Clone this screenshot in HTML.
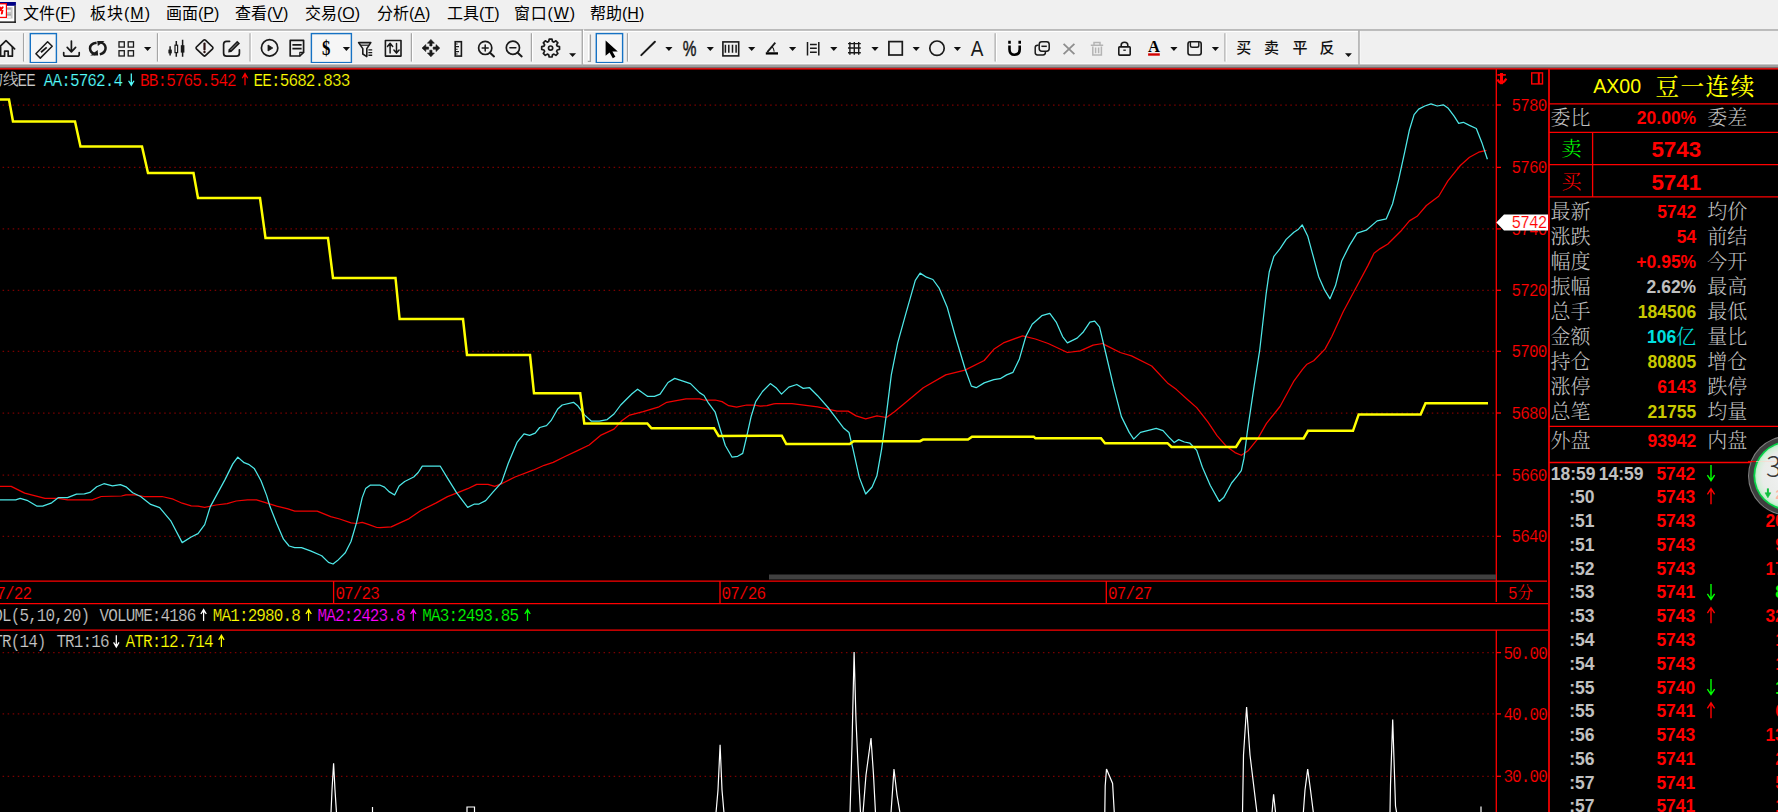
<!DOCTYPE html>
<html lang="zh-CN"><head><meta charset="utf-8"><title>AX00 豆一连续</title>
<style>
html,body{margin:0;padding:0;background:#000;}
body{width:1778px;height:812px;overflow:hidden;position:relative;font-family:"Liberation Sans","Noto Sans CJK SC",sans-serif;}
#chart{position:absolute;left:0;top:0;}
#chart text{white-space:pre;}
.m{font-family:"Liberation Mono",monospace;font-size:16px;letter-spacing:-0.88px;stroke:#000;stroke-width:0.18px;}
.c{font-family:"Liberation Serif","Noto Serif CJK SC",serif;font-size:17.5px;}
#menubar{position:absolute;left:0;top:0;width:1778px;height:30px;background:#f0f0f0;z-index:2;}
#menubar span.mi{position:absolute;top:3px;font-size:16px;line-height:22px;color:#000;white-space:nowrap;font-family:"Liberation Sans","Noto Sans CJK SC",sans-serif;}
#menubar u{text-decoration:underline;text-underline-offset:2px;text-decoration-thickness:1px;}
#toolbar{position:absolute;left:0;top:29px;width:1778px;height:34px;overflow:hidden;background:#f0f0f0;z-index:2;}
</style></head><body>
<svg id="chart" width="1778" height="812" viewBox="0 0 1778 812"><rect x="0" y="60" width="1778" height="752" fill="#000"/><rect x="0" y="62" width="1778" height="1" fill="#f0f0f0"/><rect x="0" y="63" width="1778" height="1" fill="#f7f7f7"/><rect x="0" y="64" width="1778" height="1" fill="#c6c6c6"/><rect x="0" y="65" width="1778" height="2" fill="#a0a0a0"/><rect x="0" y="67" width="1778" height="1" fill="#7a6c6c"/><rect x="0" y="68" width="1778" height="1" fill="#dc1414"/><rect x="0" y="69" width="1778" height="1" fill="#8c0000"/><g stroke="#ff0000" stroke-width="1.3" fill="none"><path d="M0 581.2H1547M0 603.6H1549M0 630.1H1549"/><path d="M1496.3 69V602M1496.3 630V812"/><path d="M1549 69V812" stroke-width="2" stroke="#d80000"/><path d="M333.6 581V603M720 581V603M1106.3 581V603"/></g><g stroke="#7a0000" stroke-width="1.25" stroke-dasharray="1.5 3.55" fill="none"><path d="M2.6 105H1496"/><path d="M2.6 167.4H1496"/><path d="M2.6 228.9H1496"/><path d="M2.6 290.3H1496"/><path d="M2.6 351.3H1496"/><path d="M2.6 413H1496"/><path d="M2.6 475H1496"/><path d="M2.6 536.3H1496"/><path d="M2.6 652.6H1496"/><path d="M2.6 713.9H1496"/><path d="M2.6 776.3H1496"/></g><g stroke="#ff0000" stroke-width="1.3"><path d="M1496 105H1501"/><path d="M1496 167.4H1501"/><path d="M1496 228.9H1501"/><path d="M1496 290.3H1501"/><path d="M1496 351.3H1501"/><path d="M1496 413H1501"/><path d="M1496 475H1501"/><path d="M1496 536.3H1501"/><path d="M1496 652.6H1501"/><path d="M1496 713.9H1501"/><path d="M1496 776.3H1501"/></g><path d="M1359 63V65.5M582.3 63V65.5" stroke="#b0b0b0" stroke-width="1.5"/><rect x="769" y="574.5" width="727" height="5" fill="#404040"/><polyline points="0,486.4 11.2,486.4 24.7,493.1 45,498.3 58.5,498.3 67.5,499.9 92.2,499.9 101.2,496.5 121.5,496 126,494.9 135,494.9 144,496.5 162,496.5 173.2,499.2 182.2,503.2 191.2,505.9 198,506.2 204.7,507.3 216,505 227.2,503.7 236.2,501 247.5,499.9 256.5,499.9 265.5,502.6 276.7,506.2 288,508.9 294.7,511.1 317.2,511.1 330.7,516.7 339.7,519 351,522.8 356.6,523.5 362.2,522.4 369,524.6 376.8,527.5 380,527.6 391.2,526.9 409.2,518.6 420.5,510.7 436.2,502.9 447.5,496.6 456.5,493.2 467.7,488.7 476.7,484.4 488,484.4 494.7,486.4 502.6,483.3 515,477 533,470.2 544.2,465.3 553.2,462.4 564.5,456.7 578,450.4 589.2,445 600.5,435.4 614,429.1 621.8,420.7 629.7,415.1 643.2,411.7 659,406.8 666.8,402.3 686,398.9 699.5,398.9 704,400 715.2,400 722,401.6 728.7,405.7 736.6,407.2 746.7,405 753.5,405 760.2,406.1 767,405.7 773.7,403.9 776,403.7 792,403.7 817.6,406.9 836.9,411.1 848.1,411.1 856.1,415.9 865.7,418.8 876.9,415.9 886.5,417.5 894.5,411.7 904.1,403.7 923.3,387.7 945.7,374.9 965,370.1 984.2,360.5 993.8,349.3 1003.4,342.9 1022.6,335.8 1035.4,339 1048.2,343.5 1067.4,352.5 1080.3,350.9 1093.1,345.1 1102.7,343.5 1104.5,344.6 1120.2,352.5 1131.5,355.9 1151.7,366 1167.5,382.9 1176.5,389.6 1187.7,399.7 1196.7,407.6 1208,422.2 1217,435.7 1226,445.9 1235,452.6 1241.3,455.3 1248.5,450.4 1257.5,439.1 1266.5,423.4 1280,406.5 1293.5,381.7 1302.5,369.4 1307,364.2 1313.7,360.8 1325,349.1 1331.7,336.7 1343.2,311.8 1355.5,288.7 1367.9,265.6 1374,253.3 1380.2,248.6 1387.9,244 1401.7,230.2 1409.4,220.9 1417.1,216.3 1426.4,205.5 1438.7,196.3 1447.9,180.9 1460.3,165.5 1469.5,157.2 1478.7,152.2 1486.4,150.4" fill="none" stroke="#f00000" stroke-width="1.25" stroke-linejoin="round"/><polyline points="0,499.9 15.7,499.9 20.2,498.3 27,500.3 37.1,506.2 42.7,506.2 51.7,502.8 58.5,497.6 67.5,497.6 76.5,494.2 84.4,493.8 90,492.4 96.7,486.8 103.9,483.7 112.5,485.9 120.4,484.6 126,486.8 132.7,492.7 140.6,496.5 150.7,504.4 159.7,507.7 171,521.2 182.2,542.6 191.2,537 198,533.6 204.7,524.6 210.3,506.6 225,479.6 232.8,463.9 237.8,457.1 244.1,462.7 248.6,464.3 254.2,468.4 261,480.7 266.6,495.4 270,506.6 276.7,523.5 283.5,539.2 289.1,546 294.7,547.6 301.5,547.6 310.5,550.9 321.7,555.7 328.5,562.4 333,564 337.5,560.6 345.3,552.7 351,541.5 356.6,522.4 362.2,497.6 365.6,488.6 370.1,485.2 380.2,485.2 384.5,487.1 389,491.6 394.6,495 399.1,486 404.7,481.5 413.7,477 418.2,472.5 422.3,466.2 440.3,466.2 447.5,478.1 456.5,492.7 467.7,507.4 474.5,504 479,504 485.7,500.6 492.5,492.7 501.5,482.6 508.2,463.5 517.2,442.1 524,433.8 529.6,435.4 535.2,433.1 539.7,427.5 546.5,425.7 551,420.7 557.7,409 562.2,405 573.5,402.3 578,406.1 584.7,415.1 591.5,421.2 599.3,421.2 607.2,419.6 614,414 620.7,405 632,393.7 637.6,389.2 642.1,392.6 647.7,396.4 654.5,396.4 660.1,394.2 668,382.5 674.7,378.4 681.5,380.7 690.5,383.6 699.5,392.6 704,395.5 708.5,403.2 715.2,412.2 719.7,427.5 725.3,445.5 732.1,457.2 737.7,456.3 742.7,453.4 746.7,436.5 751.2,416.2 755.7,401.6 762.5,391.5 770.3,383.6 776,387.7 781.5,394.1 788.8,387.1 796.8,384.5 803.2,388.4 809.6,387.7 817.6,395.7 828.9,408.5 843.3,427.7 849,432.5 852.9,448.6 859.3,477.4 865.7,494 872.1,487 876.9,475.8 881.7,448.6 886.5,413.3 891.3,374.9 897.7,342.9 905.7,314.1 915.3,280.4 920.1,273.1 926.5,277.2 932.9,279.5 939.3,288.4 947.3,307.6 955.4,336.5 965,368.5 971.4,386.1 976.2,387.7 984.2,382.9 993.8,379.7 1000.2,378.7 1006.6,374.9 1013,372.3 1019.4,358.9 1025.8,336.5 1032.2,324.3 1041.8,315.7 1049.8,313.4 1056.2,322.1 1062.6,336.5 1067.4,342.9 1077.1,338.1 1083.5,331.7 1089.9,322.1 1094.7,321.1 1099.5,326.9 1105.6,352.5 1113.5,386.2 1121.4,416.6 1129.2,432.4 1133.7,439.1 1140.5,432.4 1149.5,430.1 1156.2,428.3 1163,430.6 1168.6,436.9 1174.2,442.5 1178.7,439.6 1184.4,442 1190,443.2 1196.7,450.4 1202.4,467.2 1210.2,485.2 1219.2,501.4 1223.7,497.6 1231.6,483 1237.2,476.2 1241.3,470.6 1244,458.2 1247.4,431.2 1254.1,386.2 1259.7,350.2 1266.2,293.3 1269.3,271.7 1273.9,256.3 1280.1,248.6 1286.2,239.4 1293.9,232.3 1298.5,229.2 1302.2,224.9 1307.8,236.3 1312.4,253.3 1318.6,276.4 1324.7,290.2 1330,298.8 1335.5,285.6 1341.7,261 1349.4,245.6 1357.1,233.2 1366.3,230.2 1377.1,220.9 1386.3,218.8 1392.5,204 1398.7,179.3 1404.8,151.6 1409.4,130 1414.1,114.6 1418.7,109.1 1424.8,106 1431,103.9 1437.2,106 1443.3,104.8 1447.9,107.9 1454.1,116.2 1458.7,123.3 1463.3,122.3 1469.5,125.4 1476.3,128.5 1481.8,142.4 1487.4,159.3" fill="none" stroke="#4ee8e8" stroke-width="1.25" stroke-linejoin="round"/><polyline points="0,99.5 9,99.5 13,121.5 75,121.5 80.5,146.5 142,146.5 148,173 193.5,173 198,198 260,198 265.5,238 328,238 333,278 395.5,278 399.6,319 463,319 467,355 530,355 534,393.3 580.2,393.3 584.3,423.4 647.3,423.4 651.5,428.2 714,428.2 718.6,436 781.8,435.7 786.3,444 849.7,444 853.5,441.2 920,441.2 923,439.6 968,439.6 972,436.7 1033.8,436.7 1035.4,438.3 1101,438.3 1105,443.3 1167.5,443.2 1171.5,447 1236,447 1241.3,438.4 1303.6,438.4 1308,430.8 1353,430.8 1358.7,414.4 1420.6,414.4 1425.5,403.3 1488,403.3" fill="none" stroke="#ffff00" stroke-width="2.5" stroke-linejoin="miter"/><g fill="none" stroke="#fff" stroke-width="1.2" stroke-linejoin="miter"><polyline points="331,813 332,790 333.6,763.3 335,790 336.5,813"/><polyline points="372.5,813 372.5,807"/><polyline points="467,813 467,807 474.5,807 474.5,813"/><polyline points="716,813 718,790 720.1,744.7 722,790 724,813"/><polyline points="850,813 852,745 854.1,651.9 856,720 858,765 860.5,813"/><polyline points="863,813 866,775 871,738 873.5,775 875.5,813"/><polyline points="891,813 894,769 897,795 900,813"/><polyline points="1104.8,813 1105.2,786 1106.5,769 1112.6,783.5 1114.3,813"/><polyline points="1242.5,813 1243.5,755 1246.6,707 1250,755 1257,813"/><polyline points="1272,813 1273.6,794.3 1275.6,813"/><polyline points="1303.3,813 1305,790 1307.7,769 1310.5,790 1313.4,813"/><polyline points="1390,813 1390.5,785 1392.7,719.4 1394.5,775 1395.5,806 1396.7,813"/><polyline points="1481,813 1481,806.5"/></g><text x="-12.6" y="84.8" fill="#c8c8c8" class="c" style="font-size:15.5px">均线</text><text transform="translate(17.5 85.6) scale(1 1.09)" fill="#c8c8c8" class="m">EE</text><text transform="translate(43.8 85.6) scale(1 1.09)" fill="#54fcfc" class="m">AA:5762.4</text><path d="M131.3 73.6V84.89999999999999M128.60000000000002 80.7L131.3 85.3L134.0 80.7" stroke="#54fcfc" stroke-width="1.25" fill="none"/><path d="M129.9 82.3L131.3 85.0L132.70000000000002 82.3Z" fill="#54fcfc"/><text transform="translate(140 85.6) scale(1 1.09)" fill="#ff0000" class="m">BB:5765.542</text><path d="M245 85.3V74.0M242.3 78.19999999999999L245 73.6L247.7 78.19999999999999" stroke="#ff0000" stroke-width="1.25" fill="none"/><path d="M243.6 76.6L245 73.89999999999999L246.4 76.6Z" fill="#ff0000"/><text transform="translate(253.6 85.6) scale(1 1.09)" fill="#ffff00" class="m">EE:5682.833</text><text transform="translate(-15.4 621.4) scale(1 1.09)" fill="#c8c8c8" class="m">VOL(5,10,20)</text><text transform="translate(99.6 621.4) scale(1 1.09)" fill="#c8c8c8" class="m">VOLUME:4186</text><path d="M203.6 621.1V609.8M200.9 614.0L203.6 609.4L206.29999999999998 614.0" stroke="#fff" stroke-width="1.25" fill="none"/><path d="M202.2 612.4L203.6 609.6999999999999L205.0 612.4Z" fill="#fff"/><text transform="translate(212.8 621.4) scale(1 1.09)" fill="#ffff00" class="m">MA1:2980.8</text><path d="M308.6 621.1V609.8M305.90000000000003 614.0L308.6 609.4L311.3 614.0" stroke="#ffff00" stroke-width="1.25" fill="none"/><path d="M307.20000000000005 612.4L308.6 609.6999999999999L310.0 612.4Z" fill="#ffff00"/><text transform="translate(317.6 621.4) scale(1 1.09)" fill="#ff00ff" class="m">MA2:2423.8</text><path d="M413.3 621.1V609.8M410.6 614.0L413.3 609.4L416.0 614.0" stroke="#ff00ff" stroke-width="1.25" fill="none"/><path d="M411.90000000000003 612.4L413.3 609.6999999999999L414.7 612.4Z" fill="#ff00ff"/><text transform="translate(422.3 621.4) scale(1 1.09)" fill="#00ff00" class="m">MA3:2493.85</text><path d="M527.5 621.1V609.8M524.8 614.0L527.5 609.4L530.2 614.0" stroke="#00ff00" stroke-width="1.25" fill="none"/><path d="M526.1 612.4L527.5 609.6999999999999L528.9 612.4Z" fill="#00ff00"/><text transform="translate(-15.4 647.3) scale(1 1.09)" fill="#c8c8c8" class="m">ATR(14)</text><text transform="translate(56.4 647.3) scale(1 1.09)" fill="#c8c8c8" class="m">TR1:16</text><path d="M116.3 635.3V646.6M113.6 642.4L116.3 647.0L119.0 642.4" stroke="#fff" stroke-width="1.25" fill="none"/><path d="M114.89999999999999 644.0L116.3 646.7L117.7 644.0Z" fill="#fff"/><text transform="translate(125.5 647.3) scale(1 1.09)" fill="#ffff00" class="m">ATR:12.714</text><path d="M221.4 647.0V635.6999999999999M218.70000000000002 639.9L221.4 635.3L224.1 639.9" stroke="#ffff00" stroke-width="1.25" fill="none"/><path d="M220.0 638.3L221.4 635.5999999999999L222.8 638.3Z" fill="#ffff00"/><text transform="translate(-12.4 598.6) scale(1 1.09)" fill="#ff0000" class="m">07/22</text><text transform="translate(335.4 598.6) scale(1 1.09)" fill="#ff0000" class="m">07/23</text><text transform="translate(721.6 598.6) scale(1 1.09)" fill="#ff0000" class="m">07/26</text><text transform="translate(1108 598.6) scale(1 1.09)" fill="#ff0000" class="m">07/27</text><text transform="translate(1511.6 110.6) scale(1 1.09)" fill="#ff0000" class="m">5780</text><text transform="translate(1511.6 173.0) scale(1 1.09)" fill="#ff0000" class="m">5760</text><text transform="translate(1511.6 234.5) scale(1 1.09)" fill="#ff0000" class="m">5740</text><text transform="translate(1511.6 295.90000000000003) scale(1 1.09)" fill="#ff0000" class="m">5720</text><text transform="translate(1511.6 356.90000000000003) scale(1 1.09)" fill="#ff0000" class="m">5700</text><text transform="translate(1511.6 418.6) scale(1 1.09)" fill="#ff0000" class="m">5680</text><text transform="translate(1511.6 480.6) scale(1 1.09)" fill="#ff0000" class="m">5660</text><text transform="translate(1511.6 541.9) scale(1 1.09)" fill="#ff0000" class="m">5640</text><text transform="translate(1503.4 658.6) scale(1 1.09)" fill="#ff0000" class="m">50.00</text><text transform="translate(1503.4 719.9) scale(1 1.09)" fill="#ff0000" class="m">40.00</text><text transform="translate(1503.4 782.3) scale(1 1.09)" fill="#ff0000" class="m">30.00</text><text transform="translate(1508 598.6) scale(1 1.09)" fill="#ff0000" class="m">5</text><text x="1517.4" y="598.4" fill="#ff0000" class="c" style="font-size:15.6px">分</text><path d="M1496.3 222.5L1504 214.4H1548V230.6H1504Z" fill="#fff"/><text transform="translate(1511.6 228.2) scale(1 1.09)" fill="#ff0000" class="m" style="stroke:#fff">5742</text><g stroke="#ff0000" fill="none" stroke-width="1.4"><rect x="1531.7" y="72.9" width="10.8" height="11"/><path d="M1538.8 72.9V83.9" stroke-width="2"/></g><g stroke="#ff0000" fill="none"><path d="M1501.5 73V84.2" stroke-width="3"/><path d="M1497.4 74.9H1505.8" stroke-width="1.7"/><path d="M1497.6 79.6Q1501 86.6 1506.4 78.6" stroke-width="2.2"/></g><style>.pl{font-family:"Liberation Serif","Noto Serif CJK SC",serif;font-size:20px;font-weight:300}.pv{font-family:"Liberation Sans",sans-serif;font-weight:bold;font-size:17.5px}.pb{font-family:"Liberation Sans",sans-serif;font-weight:bold;font-size:22.4px}.pt{font-family:"Liberation Sans","Noto Sans CJK SC",sans-serif;font-size:19.6px}.ptc{font-family:"Liberation Serif","Noto Serif CJK SC",serif;font-size:23.6px;font-weight:500;letter-spacing:1.5px}</style><g stroke="#ff0000" stroke-width="1.3" fill="none"><path d="M1549 103.9H1778M1549 132.3H1778M1549 164.7H1778M1549 196.8H1778M1549 426.3H1778M1549 462.5H1778M1592.6 132.3V196.8"/></g><text x="1593.2" y="93.3" fill="#ffff00" class="pt">AX00</text><text x="1655.4" y="94.8" fill="#ffff00" class="ptc">豆一连续</text><text x="1550.5" y="125.3" fill="#c0c0c0" class="pl">委比</text><text x="1696.2" y="123.6" fill="#ff0000" class="pv" text-anchor="end">20.00%</text><text x="1707.2" y="125.3" fill="#c0c0c0" class="pl">委差</text><text x="1561.5" y="156.3" fill="#00ff00" class="pl">卖</text><text x="1651.4" y="157.1" fill="#ff0000" class="pb">5743</text><text x="1561.5" y="189" fill="#ff0000" class="pl">买</text><text x="1651.4" y="189.7" fill="#ff0000" class="pb">5741</text><text x="1550.5" y="218.6" fill="#c0c0c0" class="pl">最新</text><text x="1696.2" y="217.6" fill="#ff0000" class="pv" text-anchor="end">5742</text><text x="1707.2" y="218.6" fill="#c0c0c0" class="pl">均价</text><text x="1550.5" y="243.65" fill="#c0c0c0" class="pl">涨跌</text><text x="1696.2" y="242.65" fill="#ff0000" class="pv" text-anchor="end">54</text><text x="1707.2" y="243.65" fill="#c0c0c0" class="pl">前结</text><text x="1550.5" y="268.7" fill="#c0c0c0" class="pl">幅度</text><text x="1696.2" y="267.7" fill="#ff0000" class="pv" text-anchor="end">+0.95%</text><text x="1707.2" y="268.7" fill="#c0c0c0" class="pl">今开</text><text x="1550.5" y="293.75" fill="#c0c0c0" class="pl">振幅</text><text x="1696.2" y="292.75" fill="#c0c0c0" class="pv" text-anchor="end">2.62%</text><text x="1707.2" y="293.75" fill="#c0c0c0" class="pl">最高</text><text x="1550.5" y="318.8" fill="#c0c0c0" class="pl">总手</text><text x="1696.2" y="317.8" fill="#c8c800" class="pv" text-anchor="end">184506</text><text x="1707.2" y="318.8" fill="#c0c0c0" class="pl">最低</text><text x="1550.5" y="343.84999999999997" fill="#c0c0c0" class="pl">金额</text><text x="1676.3" y="342.84999999999997" fill="#00e0e0" class="pv" text-anchor="end">106</text><text x="1676" y="343.84999999999997" fill="#00e0e0" class="pl">亿</text><text x="1707.2" y="343.84999999999997" fill="#c0c0c0" class="pl">量比</text><text x="1550.5" y="368.90000000000003" fill="#c0c0c0" class="pl">持仓</text><text x="1696.2" y="367.90000000000003" fill="#c8c800" class="pv" text-anchor="end">80805</text><text x="1707.2" y="368.90000000000003" fill="#c0c0c0" class="pl">增仓</text><text x="1550.5" y="393.95" fill="#c0c0c0" class="pl">涨停</text><text x="1696.2" y="392.95" fill="#ff0000" class="pv" text-anchor="end">6143</text><text x="1707.2" y="393.95" fill="#c0c0c0" class="pl">跌停</text><text x="1550.5" y="419.0" fill="#c0c0c0" class="pl">总笔</text><text x="1696.2" y="418.0" fill="#c8c800" class="pv" text-anchor="end">21755</text><text x="1707.2" y="419.0" fill="#c0c0c0" class="pl">均量</text><text x="1550.5" y="447.9" fill="#c0c0c0" class="pl">外盘</text><text x="1696.2" y="446.9" fill="#ff0000" class="pv" text-anchor="end">93942</text><text x="1707.2" y="447.9" fill="#c0c0c0" class="pl">内盘</text><text x="1550.8" y="479.59999999999997" fill="#c0c0c0" class="pv">18:59</text><text x="1598.8" y="479.59999999999997" fill="#c0c0c0" class="pv">14:59</text><text x="1656.4" y="479.59999999999997" fill="#ff0000" class="pv">5742</text><path d="M1711 465.09999999999997V480.59999999999997M1707.4 475.09999999999997L1711 480.59999999999997L1714.6 475.09999999999997" stroke="#00ff00" stroke-width="1.4" fill="none"/><text x="1569.2" y="503.36999999999995" fill="#c0c0c0" class="pv">:50</text><text x="1656.4" y="503.36999999999995" fill="#ff0000" class="pv">5743</text><path d="M1711 504.36999999999995V488.86999999999995M1707.4 494.36999999999995L1711 488.86999999999995L1714.6 494.36999999999995" stroke="#ff0000" stroke-width="1.4" fill="none"/><text x="1569.2" y="527.14" fill="#c0c0c0" class="pv">:51</text><text x="1656.4" y="527.14" fill="#ff0000" class="pv">5743</text><text x="1794.6" y="527.14" fill="#ff0000" class="pv" text-anchor="end">203</text><text x="1569.2" y="550.9100000000001" fill="#c0c0c0" class="pv">:51</text><text x="1656.4" y="550.9100000000001" fill="#ff0000" class="pv">5743</text><text x="1794.6" y="550.9100000000001" fill="#ff0000" class="pv" text-anchor="end">96</text><text x="1569.2" y="574.6800000000001" fill="#c0c0c0" class="pv">:52</text><text x="1656.4" y="574.6800000000001" fill="#ff0000" class="pv">5743</text><text x="1794.6" y="574.6800000000001" fill="#ff0000" class="pv" text-anchor="end">171</text><text x="1569.2" y="598.45" fill="#c0c0c0" class="pv">:53</text><text x="1656.4" y="598.45" fill="#ff0000" class="pv">5741</text><path d="M1711 583.95V599.45M1707.4 593.95L1711 599.45L1714.6 593.95" stroke="#00ff00" stroke-width="1.4" fill="none"/><text x="1794.6" y="598.45" fill="#00ff00" class="pv" text-anchor="end">80</text><text x="1569.2" y="622.22" fill="#c0c0c0" class="pv">:53</text><text x="1656.4" y="622.22" fill="#ff0000" class="pv">5743</text><path d="M1711 623.22V607.72M1707.4 613.22L1711 607.72L1714.6 613.22" stroke="#ff0000" stroke-width="1.4" fill="none"/><text x="1794.6" y="622.22" fill="#ff0000" class="pv" text-anchor="end">325</text><text x="1569.2" y="645.99" fill="#c0c0c0" class="pv">:54</text><text x="1656.4" y="645.99" fill="#ff0000" class="pv">5743</text><text x="1794.6" y="645.99" fill="#ff0000" class="pv" text-anchor="end">12</text><text x="1569.2" y="669.76" fill="#c0c0c0" class="pv">:54</text><text x="1656.4" y="669.76" fill="#ff0000" class="pv">5743</text><text x="1794.6" y="669.76" fill="#ff0000" class="pv" text-anchor="end">10</text><text x="1569.2" y="693.53" fill="#c0c0c0" class="pv">:55</text><text x="1656.4" y="693.53" fill="#ff0000" class="pv">5740</text><path d="M1711 679.03V694.53M1707.4 689.03L1711 694.53L1714.6 689.03" stroke="#00ff00" stroke-width="1.4" fill="none"/><text x="1794.6" y="693.53" fill="#00ff00" class="pv" text-anchor="end">16</text><text x="1569.2" y="717.3" fill="#c0c0c0" class="pv">:55</text><text x="1656.4" y="717.3" fill="#ff0000" class="pv">5741</text><path d="M1711 718.3V702.8M1707.4 708.3L1711 702.8L1714.6 708.3" stroke="#ff0000" stroke-width="1.4" fill="none"/><text x="1794.6" y="717.3" fill="#ff0000" class="pv" text-anchor="end">61</text><text x="1569.2" y="741.0699999999999" fill="#c0c0c0" class="pv">:56</text><text x="1656.4" y="741.0699999999999" fill="#ff0000" class="pv">5743</text><text x="1794.6" y="741.0699999999999" fill="#ff0000" class="pv" text-anchor="end">136</text><text x="1569.2" y="764.84" fill="#c0c0c0" class="pv">:56</text><text x="1656.4" y="764.84" fill="#ff0000" class="pv">5741</text><text x="1794.6" y="764.84" fill="#ff0000" class="pv" text-anchor="end">24</text><text x="1569.2" y="788.61" fill="#c0c0c0" class="pv">:57</text><text x="1656.4" y="788.61" fill="#ff0000" class="pv">5741</text><text x="1794.6" y="788.61" fill="#ff0000" class="pv" text-anchor="end">52</text><text x="1569.2" y="812.38" fill="#c0c0c0" class="pv">:57</text><text x="1656.4" y="812.38" fill="#ff0000" class="pv">5741</text><text x="1794.6" y="812.38" fill="#ff0000" class="pv" text-anchor="end">18</text><defs><radialGradient id="bg" cx="0.5" cy="0.5" r="0.5"><stop offset="0" stop-color="#f2f2f2"/><stop offset="0.78" stop-color="#e9ece9"/><stop offset="0.93" stop-color="#d4efd9"/><stop offset="1" stop-color="#b4ecc0"/></radialGradient></defs><circle cx="1787.8" cy="475.7" r="39.8" fill="#808080"/><circle cx="1787.8" cy="475.7" r="38.8" fill="#3e3e3e"/><circle cx="1787.8" cy="475.7" r="34.4" fill="#08d048"/><circle cx="1787.8" cy="475.7" r="32.6" fill="url(#bg)"/><path d="M1748 461.5H1756" stroke="#ff0000" stroke-width="1.2" opacity="0.85"/><path d="M1756 461.5H1778" stroke="#ffd8cc" stroke-width="1" opacity="0.6"/><text x="1766" y="477.2" fill="#383838" style="font-family:'Noto Sans CJK SC','Liberation Sans',sans-serif;font-weight:300;font-size:28.6px">35</text><path d="M1767.9 488.4V495" stroke="#10c040" stroke-width="2"/><path d="M1765 492.8L1767.9 497.8L1770.8 492.8Z" fill="#10c040" stroke="#10c040" stroke-width="0.6"/><text x="1775.6" y="499" fill="#ffb4a4" style="font-family:'Liberation Sans',sans-serif;font-weight:bold;font-size:12.5px">2.1K/s</text></svg>
<div id="menubar"><svg style="position:absolute;left:0;top:0" width="18" height="26" viewBox="0 0 18 26"><rect x="-2" y="5" width="16.5" height="17" fill="#fff"/><rect x="-2" y="2" width="17.9" height="3.8" fill="#000084"/><rect x="14.3" y="5.8" width="1.6" height="17.1" fill="#3c3c3c"/><rect x="-2" y="21.4" width="17.9" height="1.5" fill="#1c1c1c"/><rect x="7" y="7.2" width="5.6" height="11.3" fill="#c4c4c4"/><rect x="7" y="7.8" width="4" height="1.5" fill="#a8a8a8"/><rect x="7" y="13.8" width="4" height="1.5" fill="#a8a8a8"/><rect x="7" y="10.3" width="3.8" height="1.4" fill="#fff"/><rect x="7" y="16.3" width="3.8" height="1.4" fill="#fff"/><rect x="-3" y="3.1" width="10" height="15" fill="#ff0000"/><rect x="-3" y="4.4" width="8.8" height="12.4" fill="#fff"/><path d="M2.6 7.4L0.4 10.2M0.2 7.6L2.4 10.6M2.2 11.6L1.8 13.6" stroke="#ff0000" stroke-width="2" stroke-linecap="round"/></svg><span class="mi" style="left:23px">文件(<u>F</u>)</span><span class="mi" style="left:90px;letter-spacing:1px">板块(<u>M</u>)</span><span class="mi" style="left:166px">画面(<u>P</u>)</span><span class="mi" style="left:235px">查看(<u>V</u>)</span><span class="mi" style="left:305px">交易(<u>O</u>)</span><span class="mi" style="left:377px">分析(<u>A</u>)</span><span class="mi" style="left:447px">工具(<u>T</u>)</span><span class="mi" style="left:514px;letter-spacing:0.8px">窗口(<u>W</u>)</span><span class="mi" style="left:590px">帮助(<u>H</u>)</span></div>
<div id="toolbar"><svg style="position:absolute;left:0;top:0" width="1778" height="37" viewBox="0 29 1778 37"><rect x="0" y="29.1" width="1778" height="1.75" fill="#b4b4b4"/><rect x="0" y="30.9" width="581.6" height="1.1" fill="#fff"/><rect x="584.2" y="30.9" width="774" height="1.1" fill="#fff"/><style>.tk{font-family:"Liberation Sans","Noto Sans CJK SC",sans-serif;font-size:15px;font-weight:500;fill:#111}</style><g stroke="#1a1a1a" fill="none" stroke-width="1.7" stroke-linecap="round" stroke-linejoin="round"><path d="M-2.2 48.6L6 40.6L14.6 48.8"/><path d="M0.6 47V56.2H4.6V51.2H8.2V56.2H12.4V47"/></g><path d="M23.6 33.2V61.6" stroke="#a6a6a6" stroke-width="1.3"/><path d="M24.8 33.2V61.6" stroke="#fff" stroke-width="1.1"/><rect x="30.3" y="33.6" width="26.099999999999998" height="29" fill="#f6f6f6" stroke="#1672c4" stroke-width="1.4"/><g stroke="#1a1a1a" fill="none" stroke-width="1.5" stroke-linejoin="round"><path d="M35.9 53.7L47.6 41.8L52.2 46.2L40.3 58.1Z"/><path d="M41 52.3L46.7 47.4" stroke-width="1.8"/></g><g stroke="#1a1a1a" fill="none" stroke-width="1.7" stroke-linecap="round" stroke-linejoin="round"><path d="M71.4 41V51.6M67.2 47.4L71.4 51.8L75.6 47.4"/><path d="M63.7 52.6V54.4Q63.7 56.2 65.5 56.2H77.4Q79.2 56.2 79.2 54.4V52.6"/></g><g stroke="#1a1a1a" fill="none" stroke-width="2.5"><path d="M96.6 42.7Q90 43.4 90 48.4Q90.2 53 95.4 54.3"/><path d="M99.8 54.4Q105.8 52.8 105.6 47.8Q105.2 43.8 101.2 42.6"/></g><path d="M90.3 55.6H98.1L97.7 50Z" fill="#1a1a1a"/><path d="M97.2 41.1H104.6L97.8 45.9Z" fill="#1a1a1a"/><g stroke="#1a1a1a" fill="none" stroke-width="1.3"><rect x="119" y="41.8" width="5.3" height="5.3"/><rect x="128.2" y="41.8" width="5.3" height="5.3"/><rect x="119" y="50.7" width="5.3" height="5.3"/><rect x="128.2" y="50.7" width="5.3" height="5.3"/></g><path d="M144 47.1H151.2L147.6 51.0Z" fill="#111"/><path d="M157.5 33.2V61.6" stroke="#a6a6a6" stroke-width="1.3"/><path d="M158.7 33.2V61.6" stroke="#fff" stroke-width="1.1"/><g stroke="#1a1a1a" stroke-width="1.5" fill="none"><path d="M170.1 46.2V55.6M176.3 41.1V45.2M176.3 52.6V56.7M182.6 39.8V56.7"/><rect x="175" y="45.2" width="2.6" height="7.4" stroke-width="1.2"/></g><rect x="168.4" y="49.6" width="3.4" height="3.8" fill="#1a1a1a"/><rect x="180.8" y="45.2" width="3.6" height="7.4" fill="#1a1a1a"/><g stroke="#1a1a1a" fill="none" stroke-width="1.7" stroke-linecap="round" stroke-linejoin="round"><path d="M203.6 40.2Q204.5 39.4 205.4 40.2L212.6 47Q213.4 47.9 212.6 48.8L205.4 55.6Q204.5 56.4 203.6 55.6L196.4 48.8Q195.6 47.9 196.4 47Z"/><path d="M204.5 43.6V49.4" stroke="#2a1010" stroke-width="2.2"/><path d="M204.5 51.8V52.2" stroke="#2a1010" stroke-width="2.3"/></g><g stroke="#1a1a1a" fill="none" stroke-width="1.7" stroke-linecap="round" stroke-linejoin="round"><path d="M229.6 41.3H226.6Q223.6 41.3 223.6 44.3V53.2Q223.6 56.2 226.6 56.2H236.4Q239.4 56.2 239.4 53.2V49.8"/></g><path d="M228.6 49.4L237.2 40.8L240 43.4L231.4 52L228.2 52.4Z" fill="#1a1a1a"/><path d="M230.6 50L237.4 43.2" stroke="#999" stroke-width="0.9"/><path d="M250.1 33.2V61.6" stroke="#a6a6a6" stroke-width="1.3"/><path d="M251.29999999999998 33.2V61.6" stroke="#fff" stroke-width="1.1"/><circle cx="269.6" cy="47.9" r="8.2" stroke="#1a1a1a" fill="none" stroke-width="1.7" stroke-linecap="round" stroke-linejoin="round"/><path d="M268 45L268 51L272.8 48Z" fill="#1a1a1a" stroke="#1a1a1a" stroke-width="0.8" stroke-linejoin="round"/><g stroke="#1a1a1a" fill="none" stroke-width="1.7" stroke-linecap="round" stroke-linejoin="round" stroke-linejoin="miter"><path d="M290.2 40.4H303.6V52.4L299.8 56H290.2Z"/><path d="M299.8 56V52.4H303.6" stroke-width="1.2"/><path d="M292.4 44.9H301.6M292.4 48.7H301.6" stroke-linecap="butt"/></g><rect x="311.4" y="33.6" width="40.0" height="29" fill="#f6f6f6" stroke="#1672c4" stroke-width="1.4"/><text x="326.2" y="55.4" text-anchor="middle" style="font-family:'Liberation Serif',serif;font-weight:bold;font-size:21px;fill:#000" transform="translate(326.2 0) scale(0.8 1) translate(-326.2 0)">$</text><path d="M342.8 47.1H350.0L346.40000000000003 51.0Z" fill="#111"/><g stroke="#1a1a1a" fill="none" stroke-width="1.6" stroke-linejoin="round"><path d="M358.6 42.6H370.8L366.8 48.6V56.6L362.8 54V48.6Z"/><path d="M360.2 45.2H369.2" stroke-width="1.2"/><path d="M368.4 49.9H372.2M368.4 52.6H372.2M368.4 55.3H372.2" stroke-width="1.4"/></g><g stroke="#1a1a1a" fill="none" stroke-width="1.7" stroke-linecap="round" stroke-linejoin="round" stroke-linejoin="miter"><rect x="385.4" y="40.5" width="15.6" height="15.6" stroke-width="1.6"/><path d="M390.1 53V43.4M387.5 46.4L390.1 43.3L392.7 46.4M396.5 43.4V53M393.9 50L396.5 53.1L399.1 50" stroke-width="1.5"/></g><path d="M411.4 33.2V61.6" stroke="#a6a6a6" stroke-width="1.3"/><path d="M412.59999999999997 33.2V61.6" stroke="#fff" stroke-width="1.1"/><g fill="#1a1a1a" stroke="#1a1a1a" stroke-width="0.6" stroke-linejoin="round"><path d="M430.9 39.4L434.4 43.2H432V46H429.8V43.2H427.4Z"/><path d="M430.9 56.8L434.4 53H432V50.2H429.8V53H427.4Z"/><path d="M422 48.1L425.8 44.6V47H428.6V49.2H425.8V51.6Z"/><path d="M439.8 48.1L436 44.6V47H433.2V49.2H436V51.6Z"/></g><g stroke="#1a1a1a" fill="none" stroke-width="1.6"><rect x="455.2" y="41.7" width="6.2" height="14.4"/><path d="M455.2 44H457.6M455.2 46.6H459M455.2 49.2H457.6M455.2 51.6H459M455.2 54H457.6" stroke-width="1.1"/></g><g stroke="#1a1a1a" fill="none" stroke-width="1.7" stroke-linecap="round" stroke-linejoin="round"><circle cx="485.2" cy="47.9" r="6.6"/><path d="M482.2 47.9H488.2M485.2 44.9V50.9" stroke-width="1.5"/><path d="M490 52.7L494 56.4" stroke-width="2"/></g><g stroke="#1a1a1a" fill="none" stroke-width="1.7" stroke-linecap="round" stroke-linejoin="round"><circle cx="512.9" cy="47.7" r="6.6"/><path d="M509.9 47.7H515.9" stroke-width="1.5"/><path d="M517.7 52.7L521.7 56.4" stroke-width="2"/></g><path d="M531.4 33.2V61.6" stroke="#a6a6a6" stroke-width="1.3"/><path d="M532.6 33.2V61.6" stroke="#fff" stroke-width="1.1"/><path d="M548.7 41.5L549.2 39.2L552.0 39.2L552.5 41.5L553.9 42.1L555.9 40.8L557.9 42.8L556.6 44.8L557.2 46.2L559.5 46.7L559.5 49.5L557.2 50.0L556.6 51.4L557.9 53.4L555.9 55.4L553.9 54.1L552.5 54.7L552.0 57.0L549.2 57.0L548.7 54.7L547.3 54.1L545.3 55.4L543.3 53.4L544.6 51.4L544.0 50.0L541.7 49.5L541.7 46.7L544.0 46.2L544.6 44.8L543.3 42.8L545.3 40.8L547.3 42.1Z" stroke="#1a1a1a" fill="none" stroke-width="1.7" stroke-linecap="round" stroke-linejoin="round" stroke-width="1.6"/><circle cx="550.6" cy="48.1" r="2.1" stroke="#1a1a1a" fill="none" stroke-width="1.7" stroke-linecap="round" stroke-linejoin="round" stroke-width="1.6"/><path d="M569.1 53.2H576.1L572.6 57.0Z" fill="#111"/><path d="M582.3 29.5V65" stroke="#a0a0a0" stroke-width="1.3"/><path d="M583.5 29.5V65" stroke="#fff" stroke-width="1.2"/><path d="M588.6 34.4V61.4" stroke="#fff" stroke-width="1.3"/><path d="M590.4 34.4V61.4H587.8" stroke="#a0a0a0" stroke-width="1.3" fill="none"/><rect x="596.3" y="33.6" width="26.300000000000068" height="29" fill="#f6f6f6" stroke="#1672c4" stroke-width="1.4"/><path d="M605.6 40.6V55.8L609.6 52.4L612.8 58.2L615.4 56.8L612.4 51.4L617.8 51.4Z" fill="#000"/><path d="M627.5 33.2V61.6" stroke="#a6a6a6" stroke-width="1.3"/><path d="M628.7 33.2V61.6" stroke="#fff" stroke-width="1.1"/><path d="M641.3 55.1L654.9 41.7" stroke="#1a1a1a" stroke-width="2" stroke-linecap="round"/><path d="M665.3 47.1H672.5L668.9 51.0Z" fill="#111"/><text x="689.5" y="56" text-anchor="middle" style="font-family:'Liberation Sans',sans-serif;font-size:22px;fill:#1a1a1a;stroke:#1a1a1a;stroke-width:0.5px" transform="translate(689.5 0) scale(0.7 1) translate(-689.5 0)">%</text><path d="M706.7 47.1H713.9000000000001L710.3000000000001 51.0Z" fill="#111"/><g stroke="#1a1a1a" fill="none" stroke-width="1.6"><rect x="722.9" y="41.9" width="15.8" height="14"/><path d="M725.4 44.8V52.8M728.8 44.8V52.8M732.5 44.8V52.8M736.1 44.8V52.8" stroke-width="1.5"/></g><path d="M748.1 47.1H755.3000000000001L751.7 51.0Z" fill="#111"/><g stroke="#1a1a1a" fill="none"><path d="M765.8 53.4H778" stroke-width="2.3" stroke="#000"/><path d="M767.3 52.2L775.3 42.6" stroke-width="1.8"/><path d="M771.6 46.6Q774 48 774.2 51.6" stroke-width="1.1"/></g><path d="M789 47.1H796.2L792.6 51.0Z" fill="#111"/><g stroke="#1a1a1a" fill="none" stroke-width="1.5"><path d="M807.5 42.1V55.6M818.8 42.1V55.6"/><path d="M810 44.6H816.8M810 48.3H816.8M810 52.3H816.8"/></g><path d="M830.2 47.1H837.4000000000001L833.8000000000001 51.0Z" fill="#111"/><g stroke="#1a1a1a" fill="none" stroke-width="1.4"><path d="M849.9 42V54.8M854.3 42V54.8M858.7 42V54.8M848 43.6H860.8M848 48H860.8M848 52.8H860.8"/></g><path d="M871.4 47.1H878.6L875.0 51.0Z" fill="#111"/><rect x="888.9" y="41.6" width="13.4" height="13.4" stroke="#1a1a1a" fill="none" stroke-width="1.7"/><path d="M912.6 47.1H919.8000000000001L916.2 51.0Z" fill="#111"/><circle cx="937" cy="48.2" r="7.2" stroke="#1a1a1a" fill="none" stroke-width="1.7"/><path d="M953.8 47.1H961.0L957.4 51.0Z" fill="#111"/><text x="977" y="55.7" text-anchor="middle" style="font-family:'Liberation Sans',sans-serif;font-size:22.3px;fill:#1a1a1a" transform="translate(977 0) scale(0.85 1) translate(-977 0)">A</text><path d="M995.2 33.2V61.6" stroke="#a6a6a6" stroke-width="1.3"/><path d="M996.4000000000001 33.2V61.6" stroke="#fff" stroke-width="1.1"/><g stroke="#000" fill="none" stroke-width="2.6"><path d="M1009.5 45.6V49.4Q1009.5 54.7 1014.6 54.7Q1019.7 54.7 1019.7 49.4V45.6"/><path d="M1009.5 40.8V43.8M1019.7 40.8V43.8"/></g><g stroke="#1a1a1a" fill="none" stroke-width="1.5"><path d="M1038.6 45.2H1037.6Q1035.2 45.2 1035.2 47.6V52.6Q1035.2 55 1037.6 55H1043Q1045.4 55 1045.4 52.6V51.6"/><rect x="1039.2" y="41.8" width="10" height="9.4" rx="2.6"/><path d="M1041.4 46.3H1046.8"/></g><path d="M1063.6 43.8L1074.4 54.2M1074.4 43.8L1063.6 54.2" stroke="#8e8e8e" stroke-width="1.8"/><g stroke="#b4b4b4" fill="none" stroke-width="1.5"><path d="M1090.8 45.3H1103.2M1094 45V42.6H1100V45"/><path d="M1092.8 46.5V55H1101.4V46.5"/><path d="M1095.6 47.4V53.2M1098.6 47.4V53.2"/></g><g stroke="#1a1a1a" fill="none" stroke-width="1.6"><rect x="1118.8" y="46.9" width="11.4" height="8.2" rx="0.8"/><path d="M1121.2 46.6V45Q1121.2 42.3 1124.5 42.3Q1127.8 42.3 1127.8 45V46.6"/><path d="M1123.3 50.2H1125.8" stroke-width="1.3"/></g><text x="1154" y="51.7" text-anchor="middle" style="font-family:'Liberation Serif',serif;font-weight:bold;font-size:16.5px;fill:#000">A</text><rect x="1148.1" y="53.3" width="11.7" height="2.4" fill="#d40000"/><path d="M1170.3 47.1H1177.5L1173.8999999999999 51.0Z" fill="#111"/><g stroke="#1a1a1a" fill="none" stroke-width="1.6"><rect x="1188" y="41.8" width="13.2" height="13.2" rx="2.2"/><path d="M1190.4 42V45.4Q1190.4 47.2 1192.2 47.2H1197Q1198.8 47.2 1198.8 45.4V42" stroke-width="1.4"/></g><path d="M1211.8 47.1H1219.0L1215.3999999999999 51.0Z" fill="#111"/><path d="M1225 33.2V61.6" stroke="#a6a6a6" stroke-width="1.3"/><path d="M1226.2 33.2V61.6" stroke="#fff" stroke-width="1.1"/><text x="1243.7" y="53.3" text-anchor="middle" class="tk">买</text><text x="1271.4" y="53.3" text-anchor="middle" class="tk">卖</text><text x="1300" y="53.3" text-anchor="middle" class="tk">平</text><text x="1327" y="53.3" text-anchor="middle" class="tk">反</text><path d="M1345 53.2H1351.9L1348.45 56.900000000000006Z" fill="#111"/><path d="M1359 30V65" stroke="#b0b0b0" stroke-width="1.7"/><path d="M1360.4 31V65" stroke="#f6f6f6" stroke-width="1"/></svg></div>
</body></html>
